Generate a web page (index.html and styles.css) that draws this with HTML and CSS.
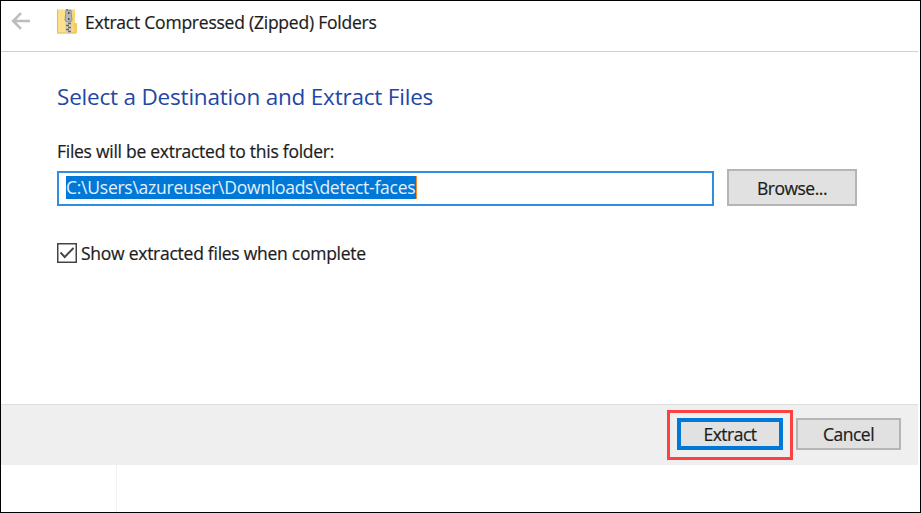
FILE: index.html
```html
<!DOCTYPE html>
<html lang="en">
<head>
<meta charset="utf-8">
<title>Extract Compressed (Zipped) Folders</title>
<link rel="stylesheet" href="styles.css">
</head>
<body>
<div class="frame">
  <main class="wizard">
    <header class="titlebar">
      <svg class="back" width="20" height="18" viewBox="0 0 20 18" fill="none" stroke="#bdbdbd" stroke-width="2.6"><path d="M19 9H2M10 1.200 2.200 9l7.800 7.800"/></svg>
      <svg class="zip" width="20" height="25" viewBox="0 0 20 25">
        <path d="M0 .5h18V14l2 1v8.500l-2 1H0z" fill="#f6d77b"/>
        <path d="M1.500 1H8v23H1.500z" fill="#fce08e"/>
        <path d="M0 .5h1V24.500H0zM0 23.500h19v1H0z" fill="#eabf55"/>
        <path d="M16.500 15.500q0-1.500 2-1.500T20 15.500V23q0 1.500-2 1.500z" fill="#f3ca5b"/>
        <path d="M8.500 0h6v24h-6z" fill="#d7d2bd"/>
        <path d="M9 1h2M12 2.500h2M11 14.500h3M9 16.500h3M11 18.500h3M9 20.500h3M11 22.500h3" stroke="#666" stroke-width="1.300"/>
        <path d="M9 1.500h5l1 9.500q0 2-3.500 2T8 11z" fill="#b4b5b5" stroke="#888" stroke-width=".8"/>
        <path d="M11 3h1.500v2H11zM11 9h1.500v2H11z" fill="#4c4c4c"/>
      </svg>
      <span class="text title">Extract Compressed (Zipped) Folders</span>
    </header>
    <section class="content">
      <h1 class="text heading">Select a Destination and Extract Files</h1>
      <label class="text label">Files will be extracted to this folder:</label>
      <div class="row">
        <div class="field"><span class="text path">C:\Users\azureuser\Downloads\detect-faces</span></div>
        <button class="button browse"><span class="text">Browse...</span></button>
      </div>
      <div class="option">
        <svg width="20" height="20" viewBox="0 0 20 20" fill="none" stroke="#444"><rect x=".75" y=".75" width="18.500" height="18.500" stroke-width="1.500"/><path d="m3.500 9.500 4.200 4.500L16.500 5" stroke-width="1.900"/></svg>
        <span class="text check-label">Show extracted files when complete</span>
      </div>
    </section>
    <footer class="actions">
      <div class="highlight"><button class="button extract"><span class="text">Extract</span></button></div>
      <button class="button cancel"><span class="text">Cancel</span></button>
    </footer>
  </main>
  <div class="below"><div class="pane"></div></div>
</div>
</body>
</html>
```
FILE: styles.css
```css
* { box-sizing: border-box; }
body { margin: 0; background: #fff; font: 17.5px/24px "Open Sans", "Noto Sans", sans-serif; color: #1c1c1c; }
.frame { width: 921px; height: 513px; border: 1px solid #000; overflow: hidden; }
.wizard { width: 917px; }
.titlebar { height: 51px; border-bottom: 1px solid #d0d0d0; display: flex; align-items: flex-start; }
.back { margin: 11px 0 0 10px; }
.zip { margin: 8px 0 0 26px; }
.text { white-space: nowrap; display: block; -webkit-text-stroke: 0.2px currentColor; }
.title { margin: 9px 0 0 8px; letter-spacing: -0.23px; }
.content { height: 352px; padding: 30px 0 0 56px; }
.heading { margin: 0; font-size: 22.5px; line-height: 30px; font-weight: 400; color: #1f47a5; letter-spacing: -0.2px; -webkit-text-stroke-width: 0; }
.label { margin-top: 27px; letter-spacing: -0.27px; }
.row { display: flex; gap: 13px; margin-top: 6px; height: 37px; }
.field { width: 657px; height: 35px; margin-top: 2px; border: 2px solid #2f8ee0; padding: 3px 7px; }
.path { width: 351px; height: 23px; line-height: 23px; background: #0078d7; color: #e4f1fc; border-right: 1px solid #ff8728; letter-spacing: -0.25px; -webkit-text-stroke-width: 0; }
.button { font: inherit; color: #1c1c1c; background: #e1e1e1; border: 2px solid #b5b5b5; padding: 0; margin: 0; display: flex; justify-content: center; align-items: center; letter-spacing: -0.5px; border-radius: 0; }
.browse { width: 130px; height: 37px; }
.option { display: flex; align-items: center; gap: 4px; margin-top: 35px; height: 24px; }
.check-label { letter-spacing: -0.26px; }
.actions { height: 61px; background: #efefef; border-top: 1px solid #dedede; display: flex; justify-content: flex-end; align-items: flex-start; gap: 3px; padding: 5px 17px 0 0; }
.highlight { width: 126px; height: 50px; border: 3px solid #fb4141; padding: 5px 7px; }
.extract { width: 106px; height: 32px; border: 4px solid #0078d7; }
.cancel { width: 105px; height: 32px; margin-top: 8px; }
.below { height: 47px; }
.pane { width: 116px; height: 47px; border-right: 1px solid #f2f2f2; }
```
